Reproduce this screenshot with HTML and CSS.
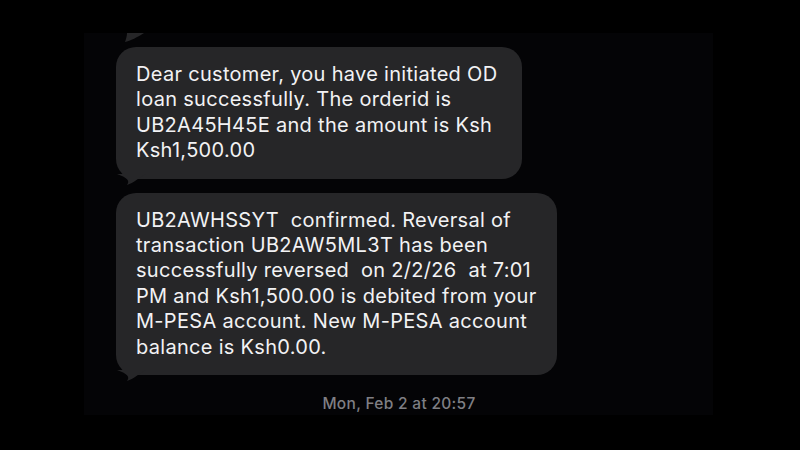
FILE: index.html
```html
<!DOCTYPE html>
<html>
<head>
<meta charset="utf-8">
<link rel="stylesheet" href="styles.css">
</head>
<body>
<div class="screen">
  <svg class="prev-tail" width="24" height="14" viewBox="0 0 24 14"><path d="M7 0 L24 0 C18 4 10 8 5 9 C6 6 7 3 7 0 Z" fill="#262628"/></svg>
  <div class="thread">
    <div class="msg">
      <div class="bubble b1">Dear customer, you have initiated OD<br>loan successfully. The orderid is<br>UB2A45H45E and the amount is Ksh<br>Ksh1,500.00</div>
      <svg class="tail" width="30" height="16" viewBox="0 0 30 16"><path d="M1 0 L30 0 C22 4 18 9 11 11 C14 7 12 4 1 0 Z" fill="#262628"/></svg>
    </div>
    <div class="msg">
      <div class="bubble b2">UB2AWHSSYT&nbsp; confirmed. Reversal of<br>transaction UB2AW5ML3T has been<br>successfully reversed&nbsp; on 2/2/26&nbsp; at 7:01<br>PM and Ksh1,500.00 is debited from your<br>M-PESA account. New M-PESA account<br>balance is Ksh0.00.</div>
      <svg class="tail" width="30" height="16" viewBox="0 0 30 16"><path d="M1 0 L30 0 C22 4 18 9 11 11 C14 7 12 4 1 0 Z" fill="#262628"/></svg>
    </div>
    <div class="stamp">Mon, Feb 2 at 20:57</div>
  </div>
</div>
</body>
</html>
```
FILE: styles.css
```css
html, body {
  margin: 0;
  padding: 0;
  background: #000;
  width: 800px;
  height: 450px;
  overflow: hidden;
}
.screen {
  position: relative;
  margin: 33px 0 0 84px;
  width: 629px;
  height: 382px;
  background: #040406;
  overflow: hidden;
  font-family: Inter, "Noto Sans", sans-serif;
}
.prev-tail {
  position: absolute;
  left: 36px;
  top: 0;
}
.thread {
  padding: 14px 0 0 32px;
  display: flex;
  flex-direction: column;
  gap: 14px;
}
.msg {
  position: relative;
}
.bubble {
  background: #262628;
  color: #f2f2f4;
  border-radius: 20px;
  font-size: 20px;
  line-height: 25.4px;
  padding: 15px 20px 15px 20px;
  box-sizing: border-box;
  letter-spacing: 0.3px;
}
.b1 { width: 406px; }
.b2 { width: 441px; }
.tail {
  position: absolute;
  left: 0;
  bottom: -11px;
}
.stamp {
  margin-top: 6px;
  width: 566px;
  text-align: center;
  color: #7f7f84;
  font-size: 15.5px;
  font-weight: 500;
  letter-spacing: 0.3px;
  line-height: 18px;
}
```
